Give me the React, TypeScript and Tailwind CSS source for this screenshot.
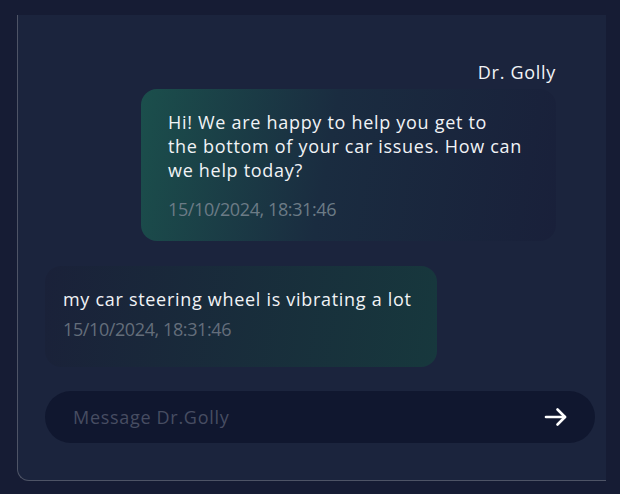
function ArrowIcon() {
  return (
    <svg width="24" height="20" viewBox="0 0 24 20" fill="none" stroke="white" strokeWidth="2.6" strokeLinecap="round" strokeLinejoin="round">
      <path d="M2 10h19" />
      <path d="M13.5 2.5 21 10l-7.5 7.5" />
    </svg>
  )
}

function App() {
  return (
    <div className="bg-[#161c34] min-h-screen pt-[15px] pl-[17px] font-['Open_Sans',sans-serif] text-[18px] leading-6 tracking-[0.7px]">

      {/* Chat panel */}
      <div className="w-[589px] h-[466px] bg-[#1b243d] border-l border-b border-[#4e5466] rounded-bl-xl flex flex-col">

        <div className="flex-1 flex flex-col pl-[27px]">
          {/* bot message */}
          <div className="text-right text-[#f1f3f6] pr-[50px] mt-[45px]">Dr. Golly</div>
          <div className="self-end mr-[50px] mt-[5px] w-[415px] rounded-2xl pl-[27px] pr-[12px] pt-[21px] pb-[20px] bg-linear-[100deg] from-[#1b4f4c] via-[#1a2c40] via-45% to-[#19203a]">
            <p className="text-[#f1f3f6] whitespace-nowrap">
              Hi! We are happy to help you get to<br />
              the bottom of your car issues. How can<br />
              we help today?
            </p>
            <p className="mt-[15px] text-[#6c7b86] tracking-[-0.4px]">15/10/2024, 18:31:46</p>
          </div>

          {/* user message */}
          <div className="mt-[25px] w-[392px] rounded-2xl pl-[18px] pr-[10px] pt-[21px] pb-[26px] bg-linear-[100deg] from-[#1a2139] to-[#17383d]">
            <p className="text-[#f1f3f6] whitespace-nowrap">my car steering wheel is vibrating a lot</p>
            <p className="mt-[6px] text-[#646e7b] tracking-[-0.4px]">15/10/2024, 18:31:46</p>
          </div>

          {/* input */}
          <div className="mt-[24px] w-[550px] h-[52px] rounded-full bg-[#10172f] flex items-center pl-[28px] pr-[27px]">
            <span className="flex-1 text-[#474d62]">Message Dr.Golly</span>
            <ArrowIcon />
          </div>
        </div>

      </div>
    </div>
  )
}

export default App
